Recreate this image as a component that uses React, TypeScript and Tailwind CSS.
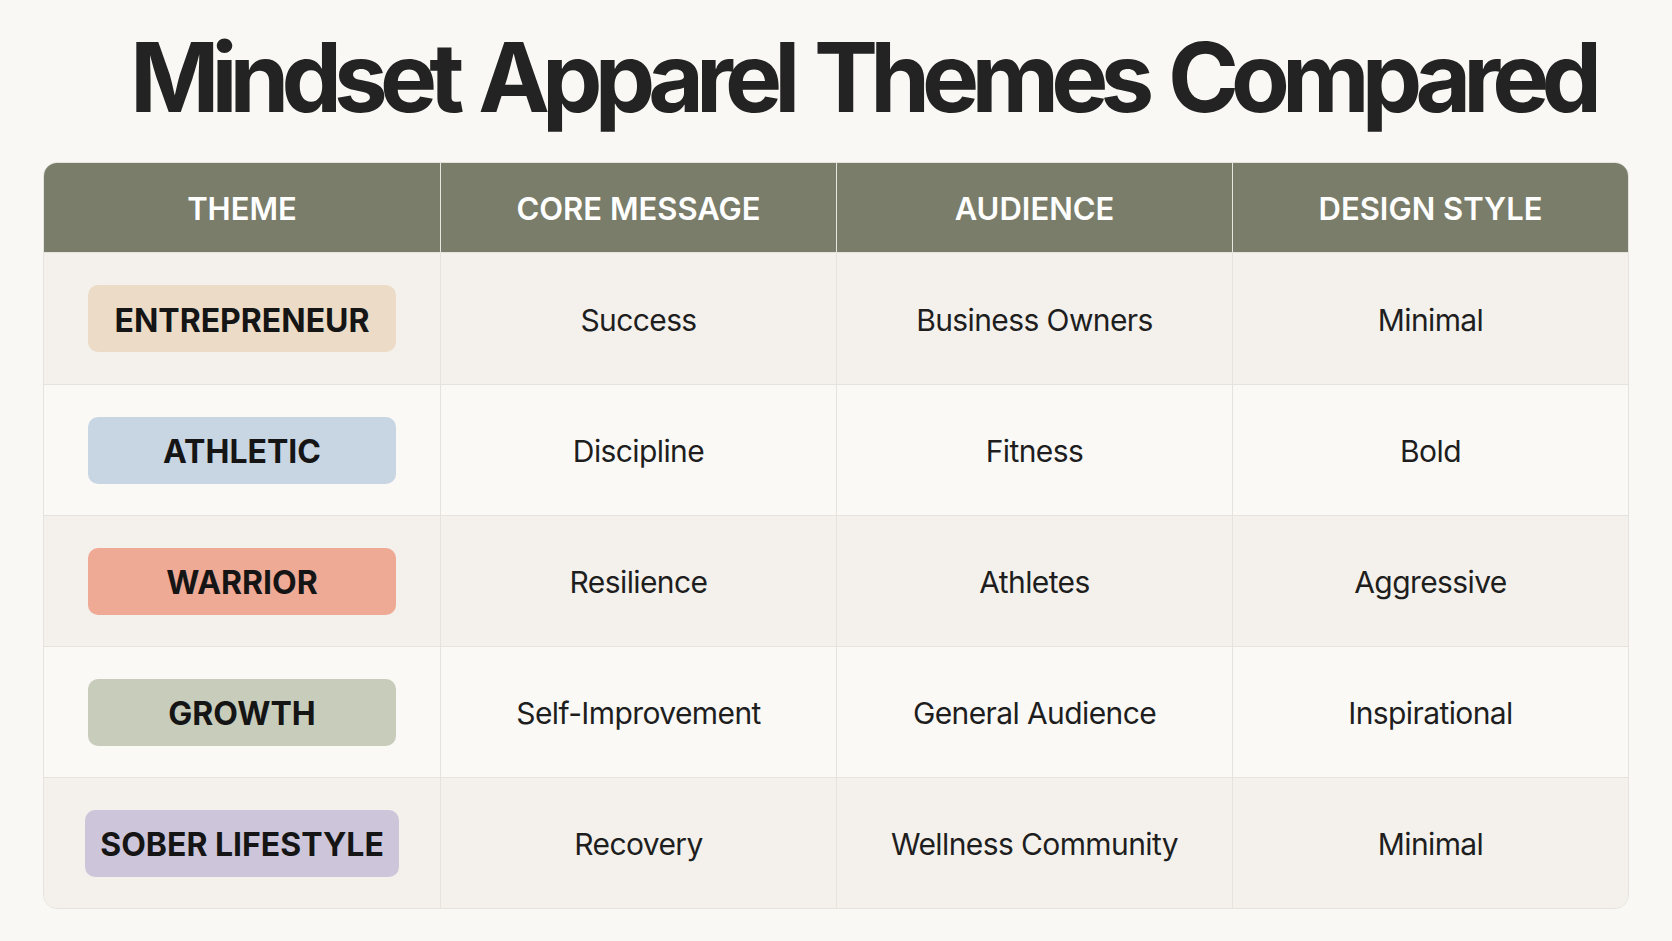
const rows = [
  { theme: "ENTREPRENEUR", badge: "bg-[#ecdcc7] w-[308px]", message: "Success", audience: "Business Owners", style: "Minimal" },
  { theme: "ATHLETIC", badge: "bg-[#c8d5e3] w-[308px]", message: "Discipline", audience: "Fitness", style: "Bold" },
  { theme: "WARRIOR", badge: "bg-[#efaa96] w-[308px]", message: "Resilience", audience: "Athletes", style: "Aggressive" },
  { theme: "GROWTH", badge: "bg-[#c8ccbb] w-[308px]", message: "Self-Improvement", audience: "General Audience", style: "Inspirational" },
  { theme: "SOBER LIFESTYLE", badge: "bg-[#cdc6da] w-[314px]", message: "Recovery", audience: "Wellness Community", style: "Minimal" },
];

const headers = ["THEME", "CORE MESSAGE", "AUDIENCE", "DESIGN STYLE"];

export default function App() {
  return (
    <div
      className="w-[1672px] h-[941px] bg-[#f9f8f5] text-[#1e1e1e] overflow-hidden"
      style={{ fontFamily: "Inter, 'Noto Sans', sans-serif" }}
    >
      {/* Title */}
      <h1 className="pt-[29px] pl-[52px] text-center text-[96px] leading-none font-bold tracking-[-0.082em] [word-spacing:0.07em] text-[#232323]">
        Mindset Apparel Themes Compared
      </h1>

      {/* Table */}
      <div className="mx-[43px] mt-[37px] rounded-[14px] border border-[#e6e3dd] overflow-hidden">
        <div className="grid grid-cols-4 h-[89px] bg-[#7a7d6a]">
          {headers.map((h, i) => (
            <div
              key={h}
              className={`flex items-center justify-center pt-[3px] text-white text-[31px] font-semibold ${
                i > 0 ? "border-l border-[#e8e6df]" : ""
              }`}
            >
              {h}
            </div>
          ))}
        </div>

        {rows.map((r, idx) => (
          <div
            key={r.theme}
            className={`grid grid-cols-4 border-t border-[#e6e3dd] ${
              idx === 0 ? "h-[132px]" : "h-[131px]"
            } ${idx % 2 === 0 ? "bg-[#f4f1ec]" : "bg-[#faf9f6]"}`}
          >
            <div className="flex items-center justify-center">
              <div
                className={`${r.badge} h-[67px] pt-[4px] rounded-[10px] flex items-center justify-center text-[32px] font-bold text-[#151515]`}
              >
                {r.theme}
              </div>
            </div>
            <div className="flex items-center justify-center pt-[3px] border-l border-[#e6e3dd] text-[30px] tracking-[-0.02em]">
              {r.message}
            </div>
            <div className="flex items-center justify-center pt-[3px] border-l border-[#e6e3dd] text-[30px] tracking-[-0.02em]">
              {r.audience}
            </div>
            <div className="flex items-center justify-center pt-[3px] border-l border-[#e6e3dd] text-[30px] tracking-[-0.02em]">
              {r.style}
            </div>
          </div>
        ))}
      </div>
    </div>
  );
}
